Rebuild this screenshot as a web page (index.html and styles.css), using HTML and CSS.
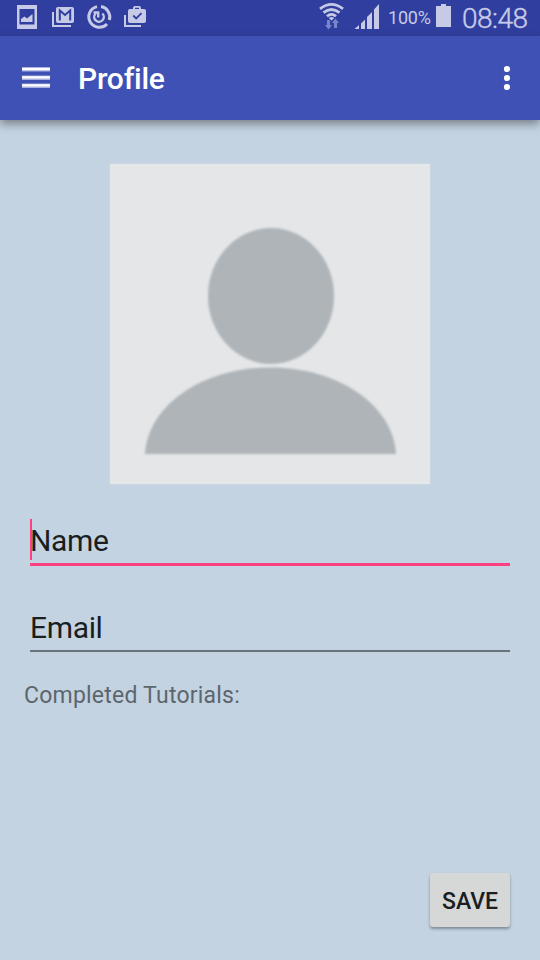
FILE: index.html
```html
<!DOCTYPE html>
<html lang="en">
<head>
<meta charset="utf-8">
<title>Profile</title>
<link rel="stylesheet" href="styles.css">
</head>
<body>
<div class="screen">
  <div class="status">
    <svg class="notifications" width="136" height="36" viewBox="16 0 136 36" fill="#c7cae7">
      <path fill-rule="evenodd" d="M17 5H37V29H17ZM19.500 9V24.500H34.500V9ZM21 22V19L24.500 16.500L27 18.500L32.500 14V22Z"/>
      <path d="M52 12H54V25H71V27H52Z"/>
      <rect x="56" y="7" width="18" height="16" rx="2"/>
      <path d="M59.800 20.500V10.500L65 15L70.200 10.500V20.500" fill="none" stroke="#303f9f" stroke-width="2"/>
      <g fill="none" stroke="#c7cae7">
        <path stroke-width="3" d="M97 6.600A10.500 10.500 0 1 0 107 24M109.300 20A10.500 10.500 0 0 0 101 6.600"/>
        <path stroke-width="2.400" d="M95.500 13.700A4.800 4.800 0 1 0 102.300 13.500M93.500 12.500H98.200V17.500"/>
      </g>
      <path d="M124 15H126V25H141V27H124Z"/>
      <path fill-rule="evenodd" d="M133 9V8Q133 6 135 6H139Q141 6 141 8V9H144Q146 9 146 11V21Q146 23 144 23H130Q128 23 128 21V11Q128 9 130 9ZM135 9H139V7.700H135Z"/>
      <path d="M133.200 15.500L136.200 18.500L141.500 13.200" fill="none" stroke="#303f9f" stroke-width="1.800"/>
    </svg>
    <svg class="signals" width="62" height="36" viewBox="318 0 62 36" fill="#c7cae7">
      <g fill="none" stroke="#c7cae7" stroke-width="2.800">
        <path d="M320 8.800Q331.500 0 343 8.800M323.500 12.700Q331.500 6.200 339.500 12.700M327 16.300Q331.500 12.500 336 16.300"/>
      </g>
      <path d="M328.800 18Q331.500 15.800 334.200 18L331.500 20.500Z"/>
      <path fill="#7984c9" d="M327 20H330V25H332L328.500 29.500L325 25H327ZM335.500 18.500L339 23H337V28H334V23H332Z"/>
      <path d="M354.500 29L359 25V29ZM361 23.500L365 19.500V29H361ZM367 17L372 12V29H367ZM374 9.500L379 4V29H374Z"/>
    </svg>
    <span class="percent">100%</span>
    <svg class="battery" width="15" height="36" viewBox="436 0 15 36" fill="#c7cae7"><path d="M441 4H446V6H451V27H436V6H441Z"/></svg>
    <span class="clock">08:48</span>
  </div>
  <header class="toolbar">
    <svg width="28" height="22" viewBox="0 0 28 22"><path fill="#a9b1df" d="M0 0H28V4.500H0ZM0 8.500H28V13H0ZM0 16.500H28V21H0Z"/><path fill="#fff" d="M0 1H28V3.300H0ZM0 9.200H28V11.500H0ZM0 17.200H28V19.500H0Z"/></svg>
    <h1 class="title">Profile</h1>
    <svg class="more" width="8" height="26" viewBox="0 0 8 26" fill="#fff"><circle cx="4" cy="4" r="3.100"/><circle cx="4" cy="13" r="3.100"/><circle cx="4" cy="22" r="3.100"/></svg>
  </header>
  <main class="content">
    <svg class="avatar" width="322" height="322" viewBox="109 163 322 322">
      <rect class="backdrop" x="109.800" y="163.800" width="320.400" height="320.400" fill="#e4e6e8"/>
      <g class="person" fill="#aeb4b8"><ellipse cx="271" cy="296" rx="63" ry="68"/><path d="M145 454C148 405 203 367.500 270.500 367.500S393 405 396 454Z"/></g>
    </svg>
    <div class="field name"><span class="caret"></span>Name</div>
    <div class="field email">Email</div>
    <p class="completed">Completed Tutorials:</p>
    <button class="save">SAVE</button>
  </main>
</div>
</body>
</html>
```
FILE: styles.css
```css
* { box-sizing: border-box; }
body { margin: 0; font-family: Roboto, sans-serif; color: #1b1e20; }
.screen { width: 540px; height: 960px; display: flex; flex-direction: column; background: #c4d3e2; overflow: hidden; }
.status { height: 36px; flex: none; display: flex; align-items: center; padding-left: 16px; background: #303f9f; color: #c7cae7; }
.status svg { flex: none; }
.signals { margin-left: 166px; }
.percent { width: 48px; margin-left: 8px; font-size: 18px; line-height: 36px; letter-spacing: -0.200px; }
.clock { margin-left: 11px; padding-top: 2px; font-size: 28px; line-height: 36px; font-weight: 300; -webkit-text-stroke: 0.4px #c7cae7; letter-spacing: -0.500px; }
.toolbar { position: relative; height: 84px; flex: none; display: flex; align-items: center; padding: 0 29px 0 22px; background: #3f51b5; box-shadow: 0 4px 9px rgba(0, 0, 0, 0.4); }
.title { margin: 0 0 0 28px; padding-top: 2px; color: #fff; font-size: 30px; line-height: 36px; font-weight: 500; letter-spacing: -0.250px; }
.more { margin-left: auto; }
.content { flex: 1; display: flex; flex-direction: column; padding: 43px 30px 33px; }
.avatar { flex: none; align-self: center; overflow: visible; }
.backdrop { filter: blur(0.6px); }
.person { filter: blur(1px); }
.field { flex: none; font-size: 30px; line-height: 36px; letter-spacing: -0.350px; }
.name { position: relative; height: 48px; margin-top: 33px; padding-top: 5px; border-bottom: 3px solid #ff4081; }
.caret { position: absolute; left: 0; top: 1px; width: 2px; height: 41px; background: #ff4081; }
.email { height: 42px; margin-top: 44px; border-bottom: 2px solid #68737b; }
.completed { margin: 30px 0 0 -6px; color: #5d666c; font-size: 23px; line-height: 28px; letter-spacing: 0.220px; }
.save { width: 80px; height: 54px; margin-top: auto; align-self: flex-end; padding: 2px 0 0; border: 0; border-radius: 3px; background: #d6d7d7; color: #1b1e1f; font: 500 23px Roboto, sans-serif; box-shadow: 0 2px 3px rgba(0, 0, 0, 0.35); }
```
